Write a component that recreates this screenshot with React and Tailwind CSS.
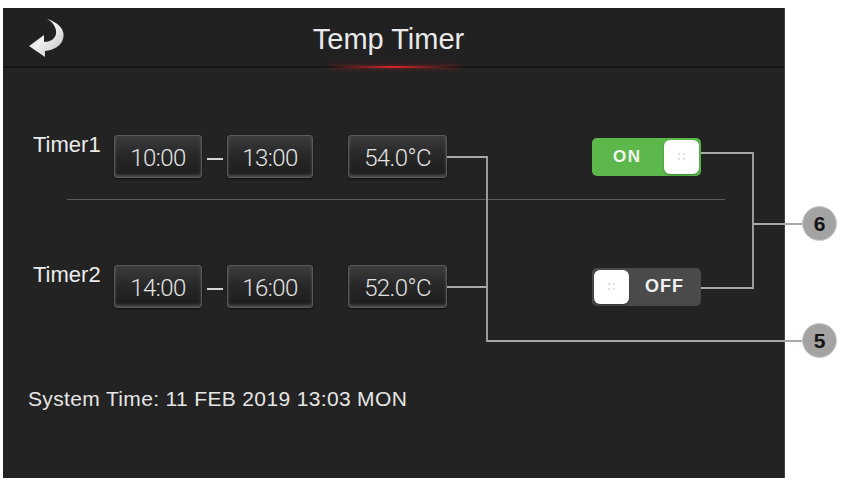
import React from "react";

const boxCls =
  "flex items-center justify-center h-[43px] pt-[3px] rounded-[3px] border border-[#5a5a5a] bg-gradient-to-b from-[#3c3c3c] via-[#262626] to-[#1d1d1d] shadow-[inset_0_-2px_3px_rgba(255,255,255,0.22),0_1px_2px_rgba(0,0,0,0.6)] font-['Roboto',sans-serif] font-light text-[24px] tracking-[-0.6px] text-[#e2e2e2]";

const Knob = () => (
  <div className="w-[35px] h-[34px] rounded-[6px] bg-white flex items-center justify-center shadow-[0_1px_2px_rgba(0,0,0,0.3)]">
    <div className="grid grid-cols-2 gap-[3px]">
      <span className="w-[2px] h-[2px] rounded-full bg-[#d6d6d6]" />
      <span className="w-[2px] h-[2px] rounded-full bg-[#d6d6d6]" />
      <span className="w-[2px] h-[2px] rounded-full bg-[#d6d6d6]" />
      <span className="w-[2px] h-[2px] rounded-full bg-[#d6d6d6]" />
    </div>
  </div>
);

const Toggle = ({ on }) =>
  on ? (
    <div className="ml-[145px] w-[109px] h-[38px] rounded-[5px] bg-[#5cb84a] flex items-center justify-between pl-[21px] pr-[2px]">
      <span className="font-['Liberation_Sans',sans-serif] text-[17px] font-semibold tracking-[1.5px] text-[#f2f2f2]">
        ON
      </span>
      <Knob />
    </div>
  ) : (
    <div className="ml-[145px] w-[109px] h-[38px] rounded-[5px] bg-[#4a4a4a] flex items-center pl-[2px]">
      <Knob />
      <span className="ml-[16px] font-['Liberation_Sans',sans-serif] text-[18px] font-bold tracking-[1px] text-[#f0f0f0]">
        OFF
      </span>
    </div>
  );

const TimerRow = ({ label, start, end, temp, on }) => (
  <div className="flex items-start pl-[30px]">
    <div className="w-[81px] text-[22px] leading-[24px] text-[#ececec]">{label}</div>
    <div className="mt-[2px] flex items-center">
      <div className={`${boxCls} w-[88px]`}>{start}</div>
      <div className="w-[25px] flex justify-center mt-[4px]">
        <div className="w-[16px] h-[2px] bg-[#d6d6d6]" />
      </div>
      <div className={`${boxCls} w-[86px]`}>{end}</div>
      <div className={`${boxCls} ml-[35px] w-[99px]`}>{temp}</div>
      <Toggle on={on} />
    </div>
  </div>
);

const Callout = ({ n, top }) => (
  <div
    className={`absolute left-[802px] ${top} w-[35px] h-[35px] rounded-full bg-[#a3a3a3] border-[1.5px] border-[#cdcdcd] flex items-center justify-center font-['Liberation_Sans',sans-serif] font-bold text-[21px] text-[#151515]`}
  >
    {n}
  </div>
);

export default function App() {
  return (
    <div className="relative w-[842px] h-[483px] bg-white overflow-hidden font-['Liberation_Sans',Arial,sans-serif]">
      <div className="ml-[3px] mt-[8px] w-[782px] h-[470px] bg-[#232323] border-r border-[#444] flex flex-col">
        {/* header */}
        <div className="h-[58px] grid grid-cols-[1fr_auto_1fr] items-center pr-[10px] bg-[#212121]">
          <div className="pl-[24px] pt-[2px]">
            <svg width="40" height="42" viewBox="0 0 40 42">
              <defs>
                <linearGradient id="arr" x1="0" y1="0" x2="1" y2="1">
                  <stop offset="0" stopColor="#8a8a8a" />
                  <stop offset="0.45" stopColor="#f2f2f2" />
                  <stop offset="1" stopColor="#bdbdbd" />
                </linearGradient>
              </defs>
              <path
                d="M20 2 C31 5 39 13 36 22 C34 29 27 33 18 34 L18 40 L2 29 L17 18 L17 25 C23 25 28 22 29 17 C30 11 26 5 20 2 Z"
                fill="url(#arr)"
              />
            </svg>
          </div>
          <div className="pt-[4px] text-[29px] leading-[28px] text-[#e9e9e9]">Temp Timer</div>
          <div />
        </div>
        <div className="h-[2px] bg-[#161616] flex justify-center">
          <div className="w-[130px] h-[2px] bg-gradient-to-r from-transparent via-[#d8262a] to-transparent shadow-[0_0_4px_rgba(220,40,40,0.6)]" />
        </div>

        <div className="mt-[65px]">
          <TimerRow label="Timer1" start="10:00" end="13:00" temp="54.0°C" on />
        </div>
        <div className="mt-[21px] ml-[64px] w-[658px] h-[1px] bg-[#5e5e5e]" />
        <div className="mt-[63px]">
          <TimerRow label="Timer2" start="14:00" end="16:00" temp="52.0°C" on={false} />
        </div>
        <div className="mt-[79px] pl-[25px] text-[21px] leading-[24px] tracking-[0.35px] text-[#e6e6e6]">
          System Time: 11 FEB 2019 13:03 MON
        </div>
      </div>

      {/* callout leader lines */}
      <svg className="absolute inset-0 pointer-events-none" width="842" height="483">
        <g stroke="#a8a8a8" strokeWidth="1.8" fill="none">
          <path d="M447 157 H487 V341 H803" />
          <path d="M447 287 H487" />
          <path d="M701 153 H753 V288 H701" />
          <path d="M753 224 H803" />
        </g>
      </svg>
      <Callout n="6" top="top-[206px]" />
      <Callout n="5" top="top-[323px]" />
    </div>
  );
}
